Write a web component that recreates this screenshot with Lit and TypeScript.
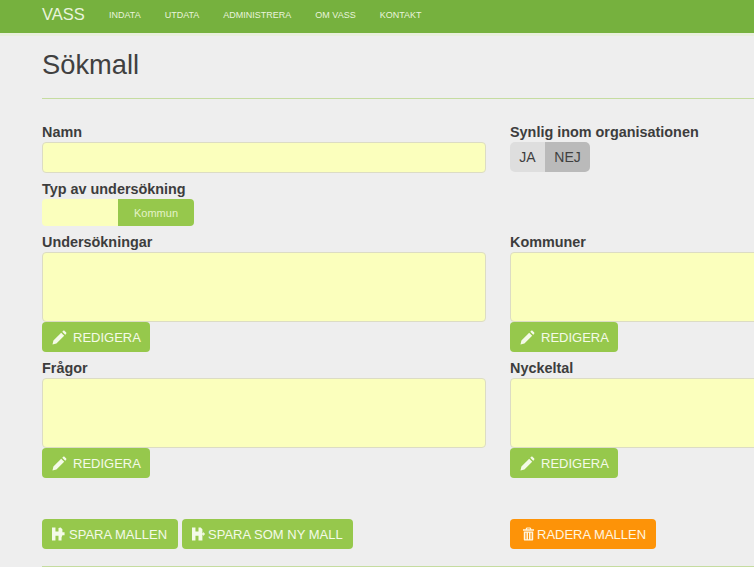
import { LitElement, html, css, svg } from "lit";
import { customElement } from "lit/decorators.js";

const pencil = svg`<path d="M.5 15.500l1-4.200 8.300-8.300 3.200 3.200-8.300 8.300-4.200 1zM10.900 1.900l.9-.9c.5-.5 1.200-.5 1.700 0l1.500 1.500c.5.500.5 1.200 0 1.700l-.9.900-3.200-3.200z"/>`;
const saveOne = svg`<path d="M0 .5h4v4.500h3.500V1L10 .5l2 2V6h2.500v3.500H12L11 12v3.500H7.500V10H4v5.500H0z"/>`;
const saveNew = svg`<path d="M0 .5h4V5h3.500V.5H10l2 2V7h1V5.500L15 8l-2 2.500V9h-1v6.500H7.500V10H4v5.500H0z"/>`;
const trash = svg`<path d="M4.500 2C4.500.8 5.500 0 6.500 0h3c1 0 2 .8 2 2h3.300v2H1.200V2h3.300zM6 2h4c0-.5-.3-.8-.8-.8H6.800C6.300 1.200 6 1.500 6 2zM2.200 5h11.600v9.800c0 .7-.5 1.200-1.200 1.200H3.400c-.7 0-1.200-.5-1.200-1.200V5zm2 1.500v8h1.300v-8H4.200zm3.150 0v8h1.300v-8h-1.300zm3.150 0v8h1.300v-8h-1.300z"/>`;

@customElement("app-root")
export class AppRoot extends LitElement {
  static styles = css`
    :host {
      display: block;
      width: 754px;
      height: 567px;
      overflow: hidden;
      background: #eeeeee;
      font-family: "Liberation Sans", Arial, sans-serif;
      color: #3d3d3d;
    }
    .topbar {
      height: 33px;
      background: #76b13e;
      border-bottom: 3px solid #e8efdc;
      box-sizing: content-box;
      display: flex;
      align-items: center;
      padding-left: 42px;
      color: #e9f4dc;
    }
    .brand {
      font-size: 16.5px;
      width: 67px;
      margin-bottom: 4px;
    }
    .nav {
      display: flex;
      gap: 24px;
      font-size: 9px;
      margin-bottom: 4px;
    }
    .main {
      width: 900px;
      padding: 13px 0 0 42px;
    }
    h1 {
      margin: 0;
      height: 49px;
      font-size: 27.3px;
      line-height: 32px;
      font-weight: 400;
      color: #404040;
    }
    .rule {
      height: 1px;
      background: #c5dca0;
    }
    .form {
      display: grid;
      grid-template-columns: 444px 444px;
      column-gap: 24px;
      margin-top: 24px;
    }
    label {
      display: block;
      font-size: 14.4px;
      font-weight: 700;
      line-height: 18px;
      height: 19px;
      color: #3d3d3d;
    }
    .label-typ {
      margin-top: 7px;
    }
    .input {
      height: 31px;
      background: #fbffbd;
      border: 1px solid #dcdcc4;
      border-radius: 4px;
      box-sizing: border-box;
    }
    .area {
      height: 70px;
    }
    .switch {
      display: flex;
      height: 27px;
      width: 152px;
      margin-bottom: 7px;
      border-radius: 4px;
      overflow: hidden;
      font-size: 11px;
    }
    .sw-off {
      width: 76px;
      background: #fbffbd;
    }
    .sw-on {
      width: 76px;
      background: #96c84c;
      color: #e4f3c8;
      display: flex;
      align-items: center;
      justify-content: center;
    }
    .yesno {
      display: flex;
      height: 30px;
      width: 80px;
      border-radius: 5px;
      overflow: hidden;
      font-size: 14px;
      color: #3f3f3f;
    }
    .yesno span {
      display: flex;
      align-items: center;
      justify-content: center;
    }
    .ja {
      width: 35px;
      background: #dedede;
    }
    .nej {
      width: 45px;
      background: #bababa;
    }
    .btn {
      display: inline-flex;
      align-items: center;
      height: 30px;
      box-sizing: border-box;
      border-radius: 4px;
      background: #96c84c;
      color: #f4fae8;
      font-size: 13px;
      white-space: nowrap;
    }
    .btn svg {
      fill: currentColor;
      display: block;
      flex: none;
    }
    .edit {
      width: 108px;
      padding-left: 10px;
      gap: 6px;
    }
    .edit svg {
      width: 15px;
      height: 15px;
    }
    .spaced {
      margin-top: 7px;
    }
    .actions {
      display: flex;
      gap: 4px;
      margin-top: 41px;
    }
    .save {
      padding: 0 11px 0 10px;
      gap: 4px;
    }
    .save + .save {
      padding-right: 10px;
      gap: 3px;
    }
    .save svg,
    .del svg {
      width: 13px;
      height: 14px;
    }
    .del {
      background: #fd9308;
      color: #fff6e0;
      padding: 0 10px 0 12px;
      gap: 2px;
    }
    .bottom {
      margin-top: 17px;
    }
  `;

  private field(name: string, spaced = false) {
    return html`<div class=${spaced ? "spaced" : ""}>
      <label>${name}</label>
      <div class="input area"></div>
      <span class="btn edit"><svg viewBox="0 0 16 16">${pencil}</svg>REDIGERA</span>
    </div>`;
  }

  render() {
    return html`
      <header class="topbar">
        <div class="brand">VASS</div>
        <nav class="nav">
          <span>INDATA</span><span>UTDATA</span><span>ADMINISTRERA</span><span>OM VASS</span><span>KONTAKT</span>
        </nav>
      </header>
      <main class="main">
        <h1>Sökmall</h1>
        <div class="rule"></div>
        <div class="form">
          <div>
            <label>Namn</label>
            <div class="input"></div>
            <label class="label-typ">Typ av undersökning</label>
            <div class="switch"><div class="sw-off"></div><div class="sw-on">Kommun</div></div>
          </div>
          <div>
            <label>Synlig inom organisationen</label>
            <div class="yesno"><span class="ja">JA</span><span class="nej">NEJ</span></div>
          </div>
          ${this.field("Undersökningar")}${this.field("Kommuner")}
          ${this.field("Frågor", true)}${this.field("Nyckeltal", true)}
          <div class="actions">
            <span class="btn save"><svg viewBox="0 0 15 16">${saveOne}</svg>SPARA MALLEN</span>
            <span class="btn save"><svg viewBox="0 0 15 16">${saveNew}</svg>SPARA SOM NY MALL</span>
          </div>
          <div class="actions">
            <span class="btn del"><svg viewBox="0 0 16 16">${trash}</svg>RADERA MALLEN</span>
          </div>
        </div>
        <div class="rule bottom"></div>
      </main>
    `;
  }
}
